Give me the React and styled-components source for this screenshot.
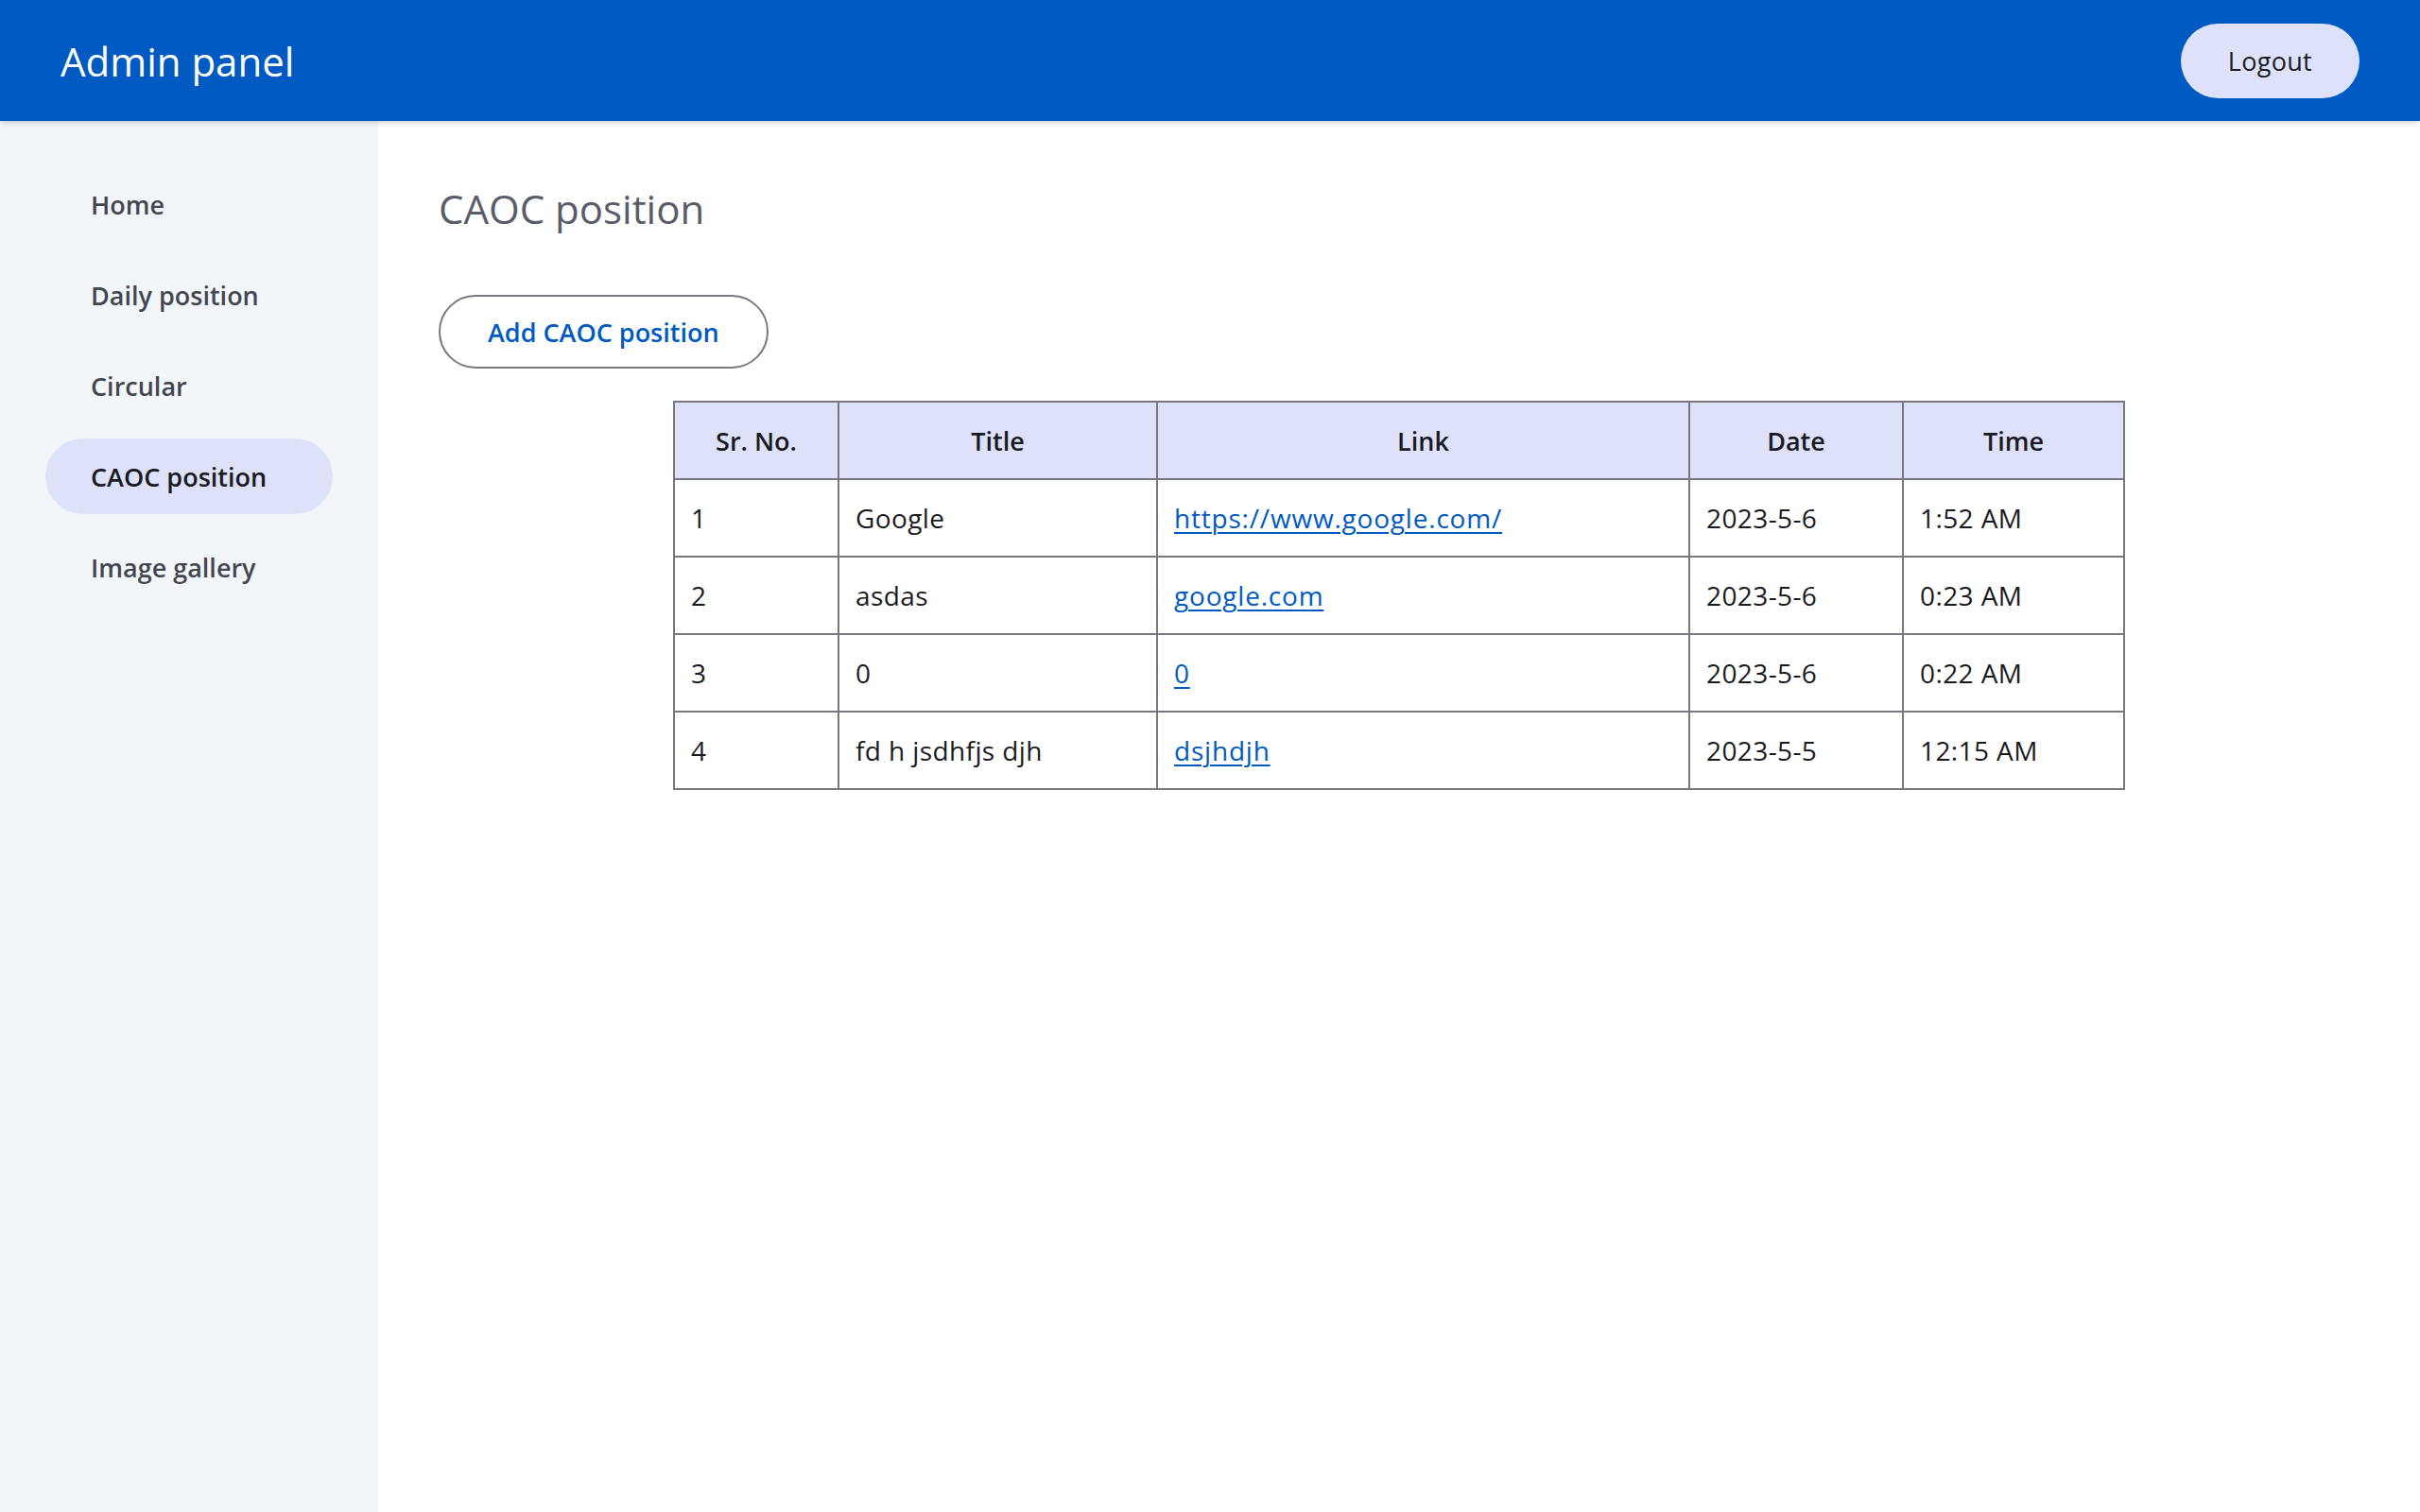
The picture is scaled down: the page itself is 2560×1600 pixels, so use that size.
import React from "react";
import styled, { createGlobalStyle } from "styled-components";

const GlobalStyle = createGlobalStyle`
  html, body {
    margin: 0;
    padding: 0;
    height: 100%;
  }
  body {
    font-family: "Open Sans", "Noto Sans", sans-serif;
    background: #ffffff;
    color: #1b1b1f;
  }
  #root {
    min-height: 100%;
  }
  * {
    box-sizing: border-box;
  }
`;

const Page = styled.div`
  display: flex;
  flex-direction: column;
  min-height: 100vh;
`;

const TopBar = styled.header`
  position: relative;
  z-index: 1;
  height: 128px;
  flex: 0 0 auto;
  display: flex;
  align-items: center;
  justify-content: space-between;
  padding: 0 64px;
  background: #005ac1;
  box-shadow: 0 2px 6px rgba(0, 0, 0, 0.18);
`;

const Brand = styled.div`
  font-size: 42px;
  font-weight: 400;
  color: #ffffff;
  line-height: 1;
  margin-top: 2px;
`;

const LogoutButton = styled.button`
  height: 79px;
  padding: 0 50px;
  border: none;
  border-radius: 40px;
  background: #dde1f9;
  color: #1a1b23;
  font-family: inherit;
  font-size: 27px;
  font-weight: 500;
  letter-spacing: 0.3px;
  cursor: pointer;
`;

const Body = styled.div`
  flex: 1;
  display: flex;
`;

const Sidebar = styled.nav`
  width: 400px;
  flex: 0 0 400px;
  background: #f2f6fb;
  padding: 48px;
  display: flex;
  flex-direction: column;
  gap: 16px;
`;

const NavItem = styled.a`
  display: flex;
  align-items: center;
  height: 80px;
  padding: 0 48px;
  border-radius: 40px;
  font-size: 27px;
  font-weight: 600;
  text-decoration: none;
  color: ${(p) => (p.$active ? "#1a1b22" : "#44464f")};
  background: ${(p) => (p.$active ? "#dde1f9" : "transparent")};
  cursor: pointer;
`;

const Main = styled.main`
  flex: 1;
  padding: 64px;
  display: flex;
  flex-direction: column;
  align-items: flex-start;
`;

const PageTitle = styled.h1`
  margin: 0;
  font-size: 42px;
  font-weight: 400;
  line-height: 57px;
  color: #5a5c69;
`;

const AddButton = styled.button`
  margin-top: 63px;
  height: 78px;
  padding: 0 50px;
  border: 2px solid #7a7880;
  border-radius: 40px;
  background: #ffffff;
  color: #005ac1;
  font-family: inherit;
  font-size: 27px;
  font-weight: 600;
  cursor: pointer;
`;

const TableWrap = styled.div`
  align-self: stretch;
  margin-top: 34px;
  display: flex;
  justify-content: center;
`;

const Table = styled.table`
  width: 1534px;
  border-collapse: collapse;
  table-layout: fixed;
  border: 2px solid #79767d;
`;

const HeadCell = styled.th`
  height: 82px;
  padding: 0 16px;
  border: 2px solid #79767d;
  background: #dde1f9;
  color: #1a1b22;
  font-size: 27px;
  font-weight: 600;
  text-align: center;
`;

const Cell = styled.td`
  height: 82px;
  padding: 0 17px;
  border: 2px solid #79767d;
  color: #1b1b1f;
  font-size: 28px;
  font-weight: 400;
  letter-spacing: 0.4px;
  text-align: left;
`;

const CellLink = styled.a`
  color: #005ac1;
  letter-spacing: 0.8px;
  text-decoration: underline;
  text-decoration-thickness: 2px;
  text-underline-offset: 4px;
`;

const navItems = ["Home", "Daily position", "Circular", "CAOC position", "Image gallery"];

const columns = [
  { label: "Sr. No.", width: 174 },
  { label: "Title", width: 337 },
  { label: "Link", width: 563 },
  { label: "Date", width: 226 },
  { label: "Time", width: 234 },
];

const rows = [
  { no: 1, title: "Google", link: "https://www.google.com/", date: "2023-5-6", time: "1:52 AM" },
  { no: 2, title: "asdas", link: "google.com", date: "2023-5-6", time: "0:23 AM" },
  { no: 3, title: "0", link: "0", date: "2023-5-6", time: "0:22 AM" },
  { no: 4, title: "fd h jsdhfjs djh", link: "dsjhdjh", date: "2023-5-5", time: "12:15 AM" },
];

export default function App() {
  return (
    <>
      <GlobalStyle />
      <Page>
        <TopBar>
          <Brand>Admin panel</Brand>
          <LogoutButton>Logout</LogoutButton>
        </TopBar>
        <Body>
          <Sidebar>
            {navItems.map((item) => (
              <NavItem key={item} $active={item === "CAOC position"}>
                {item}
              </NavItem>
            ))}
          </Sidebar>
          <Main>
            <PageTitle>CAOC position</PageTitle>
            <AddButton>Add CAOC position</AddButton>
            <TableWrap>
              <Table>
                <colgroup>
                  {columns.map((c) => (
                    <col key={c.label} style={{ width: c.width }} />
                  ))}
                </colgroup>
                <thead>
                  <tr>
                    {columns.map((c) => (
                      <HeadCell key={c.label}>{c.label}</HeadCell>
                    ))}
                  </tr>
                </thead>
                <tbody>
                  {rows.map((r) => (
                    <tr key={r.no}>
                      <Cell>{r.no}</Cell>
                      <Cell>{r.title}</Cell>
                      <Cell>
                        <CellLink href="#">{r.link}</CellLink>
                      </Cell>
                      <Cell>{r.date}</Cell>
                      <Cell>{r.time}</Cell>
                    </tr>
                  ))}
                </tbody>
              </Table>
            </TableWrap>
          </Main>
        </Body>
      </Page>
    </>
  );
}
